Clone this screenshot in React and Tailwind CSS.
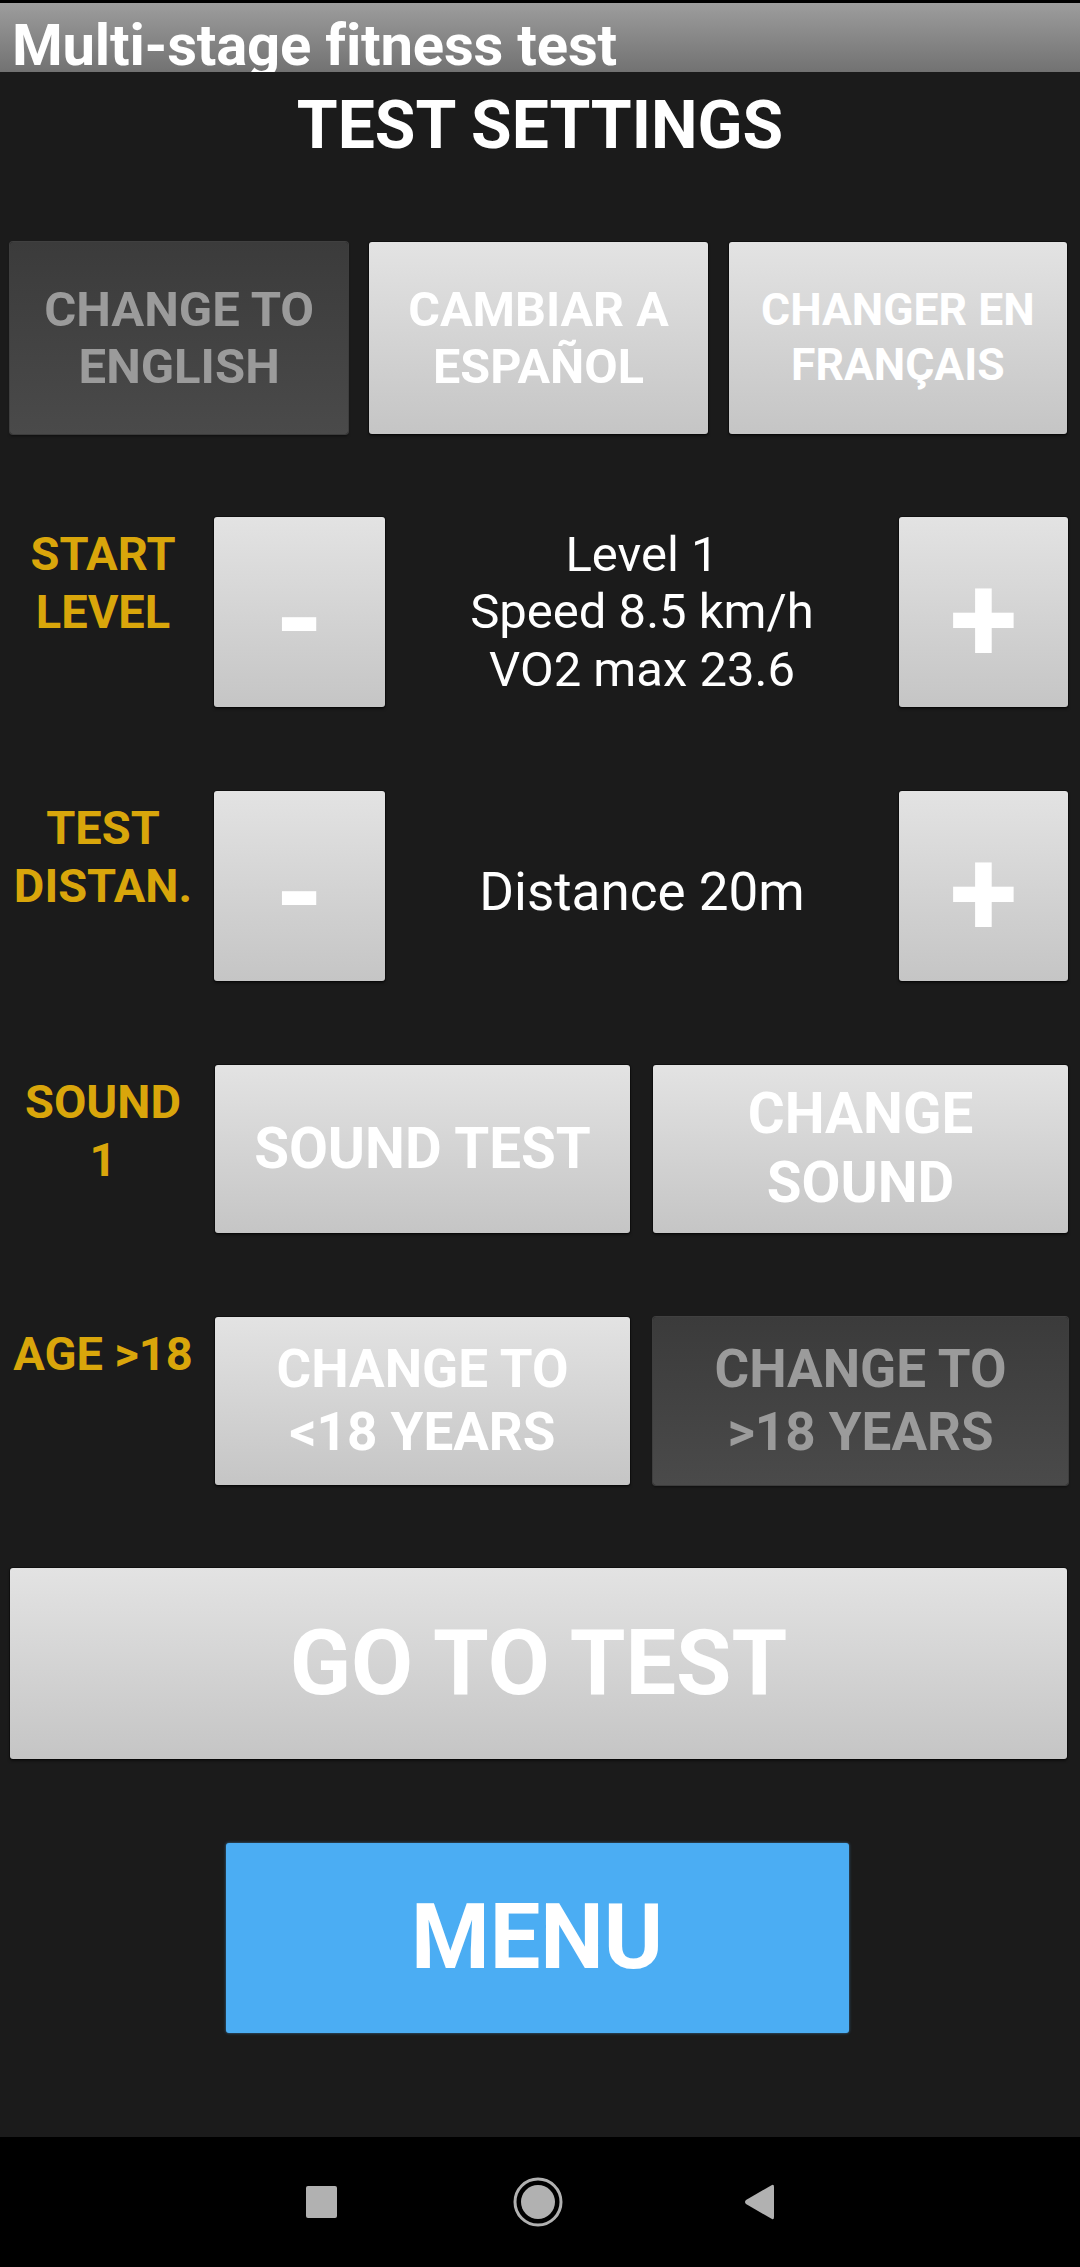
import React from "react";

const LIGHT =
  "bg-gradient-to-b from-[#e3e3e3] to-[#c5c5c5] text-white rounded-[3px] shadow-[0_0_0_1px_rgba(0,0,0,0.35),0_2px_3px_rgba(0,0,0,0.5)]";
const DARK =
  "bg-gradient-to-b from-[#3b3b3b] to-[#4a4a4a] text-[#9b9b9b] rounded-[3px] shadow-[0_0_0_1px_rgba(90,90,90,0.6),0_2px_3px_rgba(0,0,0,0.5)]";

const Btn = ({ dark, className = "", children }) => (
  <div className={`flex items-center justify-center text-center font-bold ${dark ? DARK : LIGHT} ${className}`}>
    {children}
  </div>
);

const Label = ({ children }) => (
  <div className="w-[206px] shrink-0 pt-[8px] text-center text-[47px] leading-[58px] font-bold text-[#d9a60b]">
    {children}
  </div>
);

const Stepper = ({ label, children }) => (
  <div className="flex h-[190px] pr-[12px]">
    <Label>{label}</Label>
    <Btn className="ml-[8px] w-[171px] h-full text-[124px] leading-none pt-[16px]">-</Btn>
    <div className="flex-1 flex items-center justify-center text-center text-white">
      {children}
    </div>
    <Btn className="w-[169px] h-full text-[124px] leading-none pt-[16px]">+</Btn>
  </div>
);

export default function App() {
  return (
    <div className="w-[1080px] h-[2267px] bg-[#1b1b1b] flex flex-col font-['Roboto',sans-serif] overflow-hidden">
      {/* title bar */}
      <div className="h-[3px] bg-black" />
      <div className="h-[69px] overflow-hidden bg-gradient-to-b from-[#9d9d9d] to-[#727272] pl-[12px]">
        <div className="text-white font-bold text-[58px] leading-[58px] pt-[13px] tracking-[-0.2px]">
          Multi-stage fitness test
        </div>
      </div>

      <div className="h-[170px] pt-[14px] text-center text-white font-bold text-[66px] leading-[80px]">
        TEST SETTINGS
      </div>

      {/* language */}
      <div className="flex gap-[21px] pl-[10px] pr-[13px] h-[192px]">
        <Btn dark className="flex-1 text-[49px] leading-[57px]">
          CHANGE TO<br />ENGLISH
        </Btn>
        <Btn className="flex-1 text-[48.5px] leading-[57px]">
          CAMBIAR A<br />ESPAÑOL
        </Btn>
        <Btn className="flex-1 text-[44.5px] leading-[55px]">
          CHANGER EN<br />FRANÇAIS
        </Btn>
      </div>

      <div className="flex flex-col gap-[84px] mt-[83px]">
        <Stepper label={<>START<br />LEVEL</>}>
          <div className="text-[49px] leading-[57.5px]">
            Level 1<br />Speed 8.5 km/h<br />VO2 max 23.6
          </div>
        </Stepper>

        <Stepper label={<>TEST<br />DISTAN.</>}>
          <div className="pt-[12px] text-[53px] leading-[64px]">Distance 20m</div>
        </Stepper>

        <div className="flex h-[168px] pr-[12px]">
          <Label>SOUND<br />1</Label>
          <div className="flex-1 ml-[9px] flex gap-[23px]">
            <Btn className="flex-1 text-[56.5px] leading-[69px]">SOUND TEST</Btn>
            <Btn className="flex-1 text-[56.5px] leading-[69px]">
              CHANGE<br />SOUND
            </Btn>
          </div>
        </div>

        <div className="flex h-[168px] pr-[12px]">
          <Label>AGE &gt;18</Label>
          <div className="flex-1 ml-[9px] flex gap-[23px]">
            <Btn className="flex-1 text-[53px] leading-[63px]">
              CHANGE TO<br />&lt;18 YEARS
            </Btn>
            <Btn dark className="flex-1 text-[53px] leading-[63px]">
              CHANGE TO<br />&gt;18 YEARS
            </Btn>
          </div>
        </div>
      </div>

      <div className="mt-[83px] pl-[10px] pr-[13px]">
        <Btn className="h-[191px] text-[90px] leading-none">GO TO TEST</Btn>
      </div>

      <div className="mt-[84px] flex justify-center pr-[6px]">
        <div className="w-[623px] h-[190px] flex items-center justify-center bg-[#4badf3] rounded-[3px] shadow-[0_0_3px_rgba(77,173,243,0.6)] text-white font-bold text-[90px] leading-none">
          MENU
        </div>
      </div>

      <div className="flex-1" />

      {/* android nav bar */}
      <div className="h-[130px] bg-black flex items-center justify-center">
        <div className="flex items-center">
          <div className="w-[31px] h-[32px] rounded-[2px] bg-[#b1b1b1] mr-[176px]" />
          <svg width="50" height="50" viewBox="0 0 50 50" className="mr-[180px]">
            <circle cx="25" cy="25" r="23" fill="none" stroke="#b1b1b1" strokeWidth="3" />
            <circle cx="25" cy="25" r="17" fill="#b1b1b1" />
          </svg>
          <svg width="32" height="38" viewBox="0 0 32 38">
            <path d="M29 2 Q31 1 31 4 L31 34 Q31 37 29 36 L3 21 Q1 19 3 17 Z" fill="#b1b1b1" />
          </svg>
        </div>
      </div>
    </div>
  );
}
